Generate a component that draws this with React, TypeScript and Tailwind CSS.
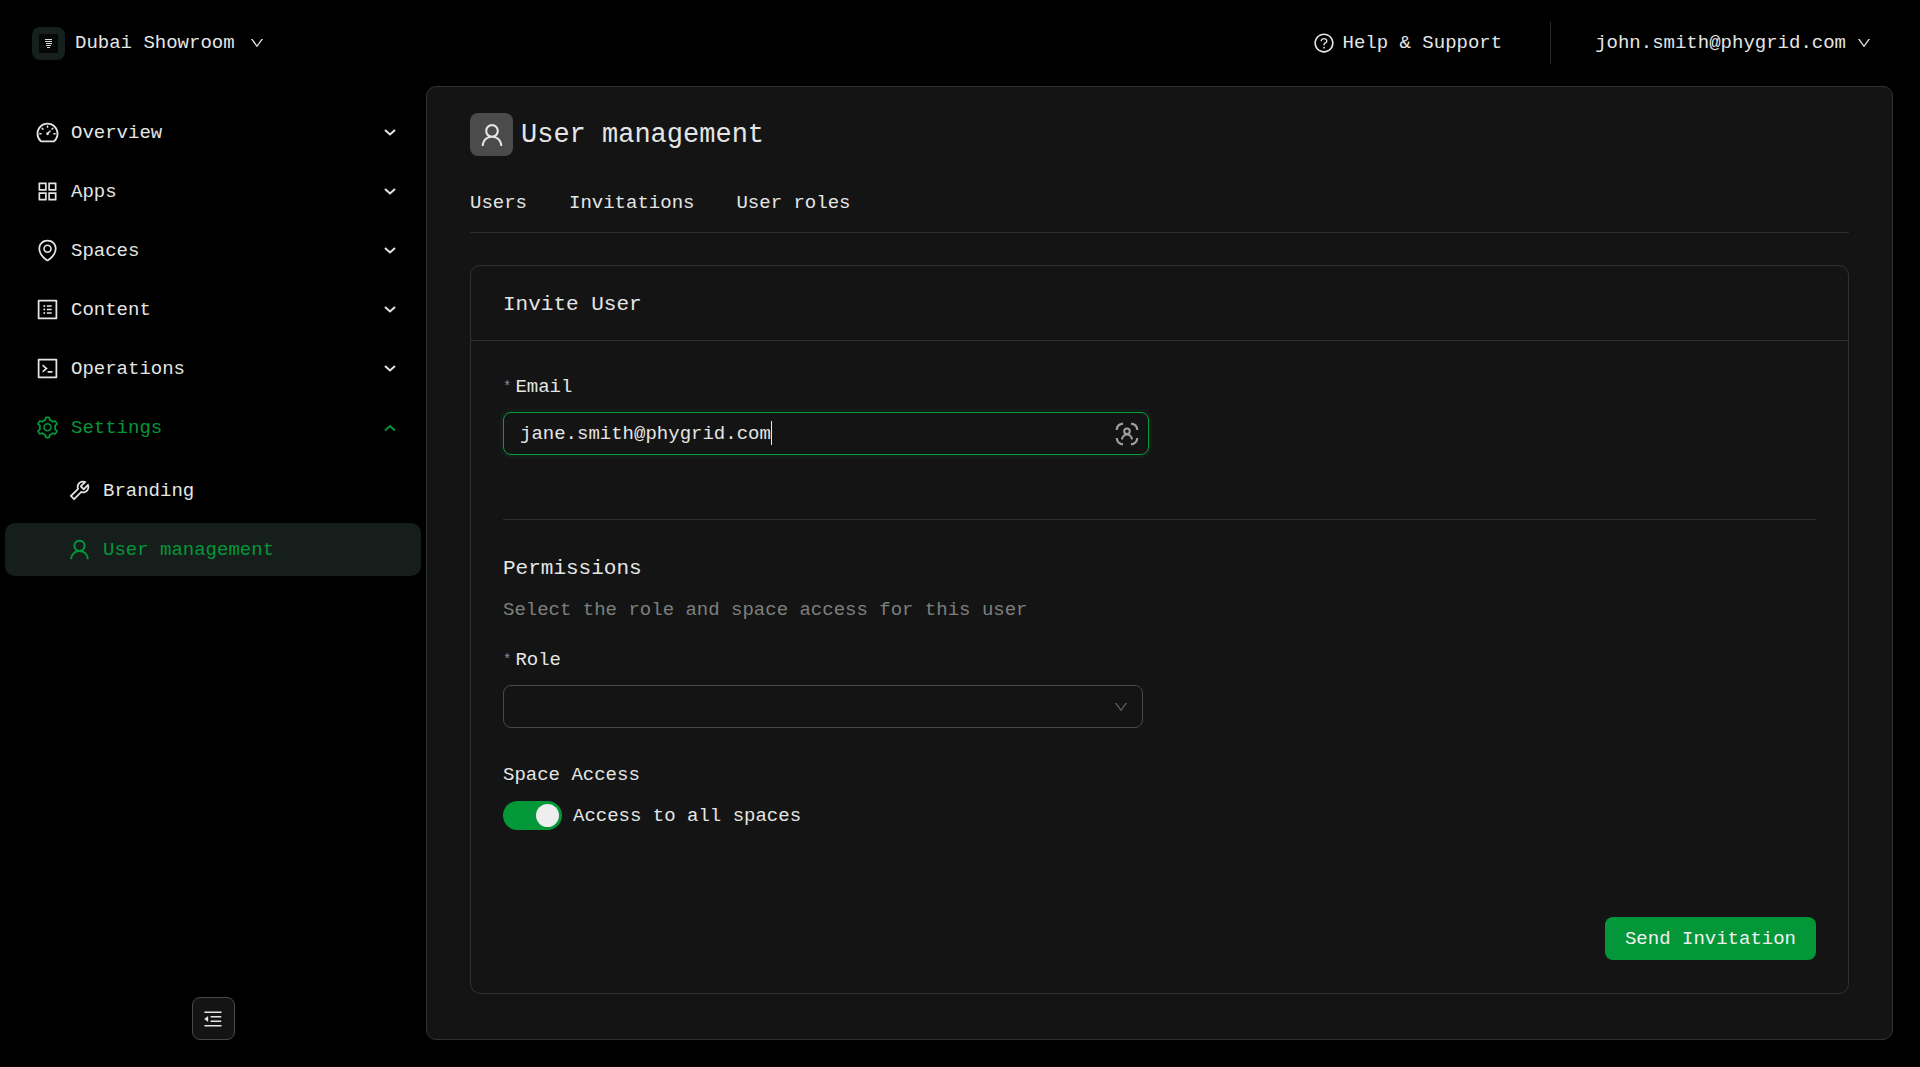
import React, { useState } from 'react';
import {
  AiOutlineAppstore,
  AiOutlineCode,
  AiOutlineDashboard,
  AiOutlineDown,
  AiOutlineEnvironment,
  AiOutlineMenuFold,
  AiOutlineProfile,
  AiOutlineQuestionCircle,
  AiOutlineSetting,
  AiOutlineTool,
  AiOutlineUser
} from 'react-icons/ai';

const menu = [
  { label: 'Overview', icon: AiOutlineDashboard },
  { label: 'Apps', icon: AiOutlineAppstore },
  { label: 'Spaces', icon: AiOutlineEnvironment },
  { label: 'Content', icon: AiOutlineProfile },
  { label: 'Operations', icon: AiOutlineCode },
  { label: 'Settings', icon: AiOutlineSetting, open: true }
];

const tabs = ['Users', 'Invitations', 'User roles'];

function MenuArrow({ open }: { open?: boolean }) {
  return (
    <svg width="12" height="8" viewBox="0 0 12 8" fill="none" stroke="currentColor" strokeWidth="2">
      <path d={open ? 'M1 6.5 6 2l5 4.5' : 'M1 1l5 4.5L11 1'} />
    </svg>
  );
}

function Logo() {
  return (
    <span className="flex h-[33px] w-[33px] items-center justify-center rounded-lg bg-[#16201c]">
      <span className="flex h-[19px] w-[19px] items-center justify-center bg-[#060807]">
        <svg width="7" height="9" viewBox="0 0 7 9" fill="none" stroke="#d4d8d6" strokeWidth="1">
          <path d="M0 .5h7M0 2.500h7M1 4.500h6M1 6.500h5M2 8.500h3" />
        </svg>
      </span>
    </span>
  );
}

function AutofillIcon() {
  return (
    <svg width="24" height="24" viewBox="0 0 24 24" fill="none" stroke="#a0a0a0" strokeWidth="2.2">
      <path d="M1.700 8C2 4.200 4.200 2 8 1.700M16 1.700c3.800.3 6 2.500 6.300 6.300M22.300 16c-.3 3.800-2.500 6-6.300 6.300M8 22.300c-3.800-.3-6-2.500-6.300-6.300" />
      <circle cx="12" cy="9.300" r="2.800" strokeWidth="2" />
      <path d="M6.800 17.400c.9-3.100 2.800-4.900 5.200-4.900s4.300 1.800 5.200 4.900" strokeWidth="2" />
    </svg>
  );
}

function Header() {
  return (
    <header className="flex h-[86px] items-center justify-between pl-8 pr-12 font-medium">
      <button className="flex items-center gap-[10px]">
        <Logo />
        <span>Dubai Showroom</span>
        <AiOutlineDown className="ml-1 h-4 w-4" />
      </button>
      <div className="flex items-center">
        <a href="#help" className="flex items-center gap-2">
          <AiOutlineQuestionCircle className="h-[22px] w-[22px]" />
          Help &amp; Support
        </a>
        <div className="ml-12 mr-11 h-[42px] w-px bg-[#2a2f2d]" />
        <button className="flex items-center gap-[10px]">
          john.smith@phygrid.com
          <AiOutlineDown className="h-4 w-4" />
        </button>
      </div>
    </header>
  );
}

function Sidebar() {
  return (
    <aside className="flex w-[426px] shrink-0 flex-col justify-between">
      <nav className="flex flex-col gap-[6px] px-[5px] pt-5">
        {menu.map(({ label, icon: Icon, open }) => (
          <button
            key={label}
            className={`flex h-[53px] items-center gap-[11px] pl-[30px] pr-[25px] ${open ? 'mb-1 text-[#049739]' : ''}`}
          >
            <Icon className="h-[25px] w-[25px]" />
            <span className="flex-1 text-left">{label}</span>
            <MenuArrow open={open} />
          </button>
        ))}
        <a href="#branding" className="flex h-[53px] items-center gap-[11px] pl-[62px]">
          <AiOutlineTool className="h-[25px] w-[25px]" />
          Branding
        </a>
        <a href="#users" className="flex h-[53px] items-center gap-[11px] rounded-[10px] bg-[#161e1b] pl-[62px] text-[#049739]">
          <AiOutlineUser className="h-[25px] w-[25px]" />
          User management
        </a>
      </nav>
      <button
        aria-label="Collapse menu"
        className="flex h-[43px] w-[43px] items-center justify-center self-center rounded-lg border border-[#444b48] bg-[#141414]"
      >
        <AiOutlineMenuFold className="h-[22px] w-[22px]" />
      </button>
    </aside>
  );
}

function InviteForm() {
  const [email, setEmail] = useState('jane.smith@phygrid.com');
  const [allSpaces, setAllSpaces] = useState(true);

  return (
    <form className="flex flex-1 flex-col px-8 pb-[33px] pt-8" onSubmit={(e) => e.preventDefault()}>
      <label htmlFor="email" className="flex h-7 items-center">
        <span className="mr-1 text-sm text-[#8a8f8d]">*</span>
        Email
      </label>
      <div className="relative mt-[11px] w-[646px] max-w-full">
        <input
          id="email"
          type="text"
          value={email}
          onChange={(e) => setEmail(e.target.value)}
          className="h-[43px] w-full rounded-lg border border-[#04a03c] bg-transparent pl-4 pr-12 shadow-[0_0_0_3px_#151c19] outline-none"
        />
        {/* Caret */}
        <span
          className="absolute top-[9px] h-6 w-px bg-[#e8e8e8]"
          style={{ left: `calc(17px + ${email.length}ch)` }}
        />
        <span className="absolute right-[10px] top-[10px]">
          <AutofillIcon />
        </span>
      </div>

      <hr className="mt-16 border-[#27302d]" />

      <h3 className="mt-[33px] text-[21px] font-medium leading-8">Permissions</h3>
      <p className="mt-[11px] leading-7 text-[#7c807e]">Select the role and space access for this user</p>

      <label htmlFor="role" className="mt-[22px] flex h-7 items-center">
        <span className="mr-1 text-sm text-[#8a8f8d]">*</span>
        Role
      </label>
      <div className="relative mt-[11px] w-[640px] max-w-full">
        <select
          id="role"
          defaultValue=""
          className="h-[43px] w-full appearance-none rounded-lg border border-[#444b48] bg-[#141414] pl-4 outline-none"
        >
          <option value=""></option>
        </select>
        <AiOutlineDown className="pointer-events-none absolute right-[14px] top-[14px] h-4 w-4 text-[#5a5f5d]" />
      </div>

      <p className="mt-[33px] leading-7">Space Access</p>
      <label className="mt-[11px] flex h-[31px] items-center gap-[11px]">
        <span className="relative flex">
          <input
            type="checkbox"
            checked={allSpaces}
            onChange={(e) => setAllSpaces(e.target.checked)}
            className="peer h-[29px] w-[59px] appearance-none rounded-full bg-[#444b48] checked:bg-[#049739]"
          />
          <span className="pointer-events-none absolute left-[3px] top-[3px] h-[23px] w-[23px] rounded-full bg-[#eeeeee] peer-checked:left-[33px]" />
        </span>
        Access to all spaces
      </label>

      <button type="submit" className="mt-auto h-[43px] self-end rounded-lg bg-[#049739] px-5 text-[#f0f0f0]">
        Send Invitation
      </button>
    </form>
  );
}

export default function App() {
  return (
    <div className="flex min-h-screen flex-col bg-black font-['Liberation_Mono',monospace] text-[19px] leading-7 text-[#e4e6e5]">
      <Header />
      <div className="flex flex-1 pb-[27px] pr-[27px]">
        <Sidebar />
        <main className="flex min-w-0 flex-1 flex-col rounded-[10px] border border-[#2c3432] bg-[#141414] px-[43px] pb-[45px] pt-[26px]">
          <div className="flex items-center gap-2">
            <span className="flex h-[43px] w-[43px] items-center justify-center rounded-lg bg-[#4b4b4b]">
              <AiOutlineUser className="h-7 w-7" />
            </span>
            <h1 className="text-[27px] leading-8">User management</h1>
          </div>

          <nav className="mt-[33px] flex gap-[42px] border-b border-[#27302d] pb-[15px]">
            {tabs.map((tab) => (
              <a key={tab} href="#tab">
                {tab}
              </a>
            ))}
          </nav>

          <section className="mt-8 flex flex-1 flex-col rounded-[10px] border border-[#2c3432]">
            <h2 className="flex h-[75px] items-center border-b border-[#2c3432] px-8 pt-1 text-[21px] font-medium">
              Invite User
            </h2>
            <InviteForm />
          </section>
        </main>
      </div>
    </div>
  );
}
